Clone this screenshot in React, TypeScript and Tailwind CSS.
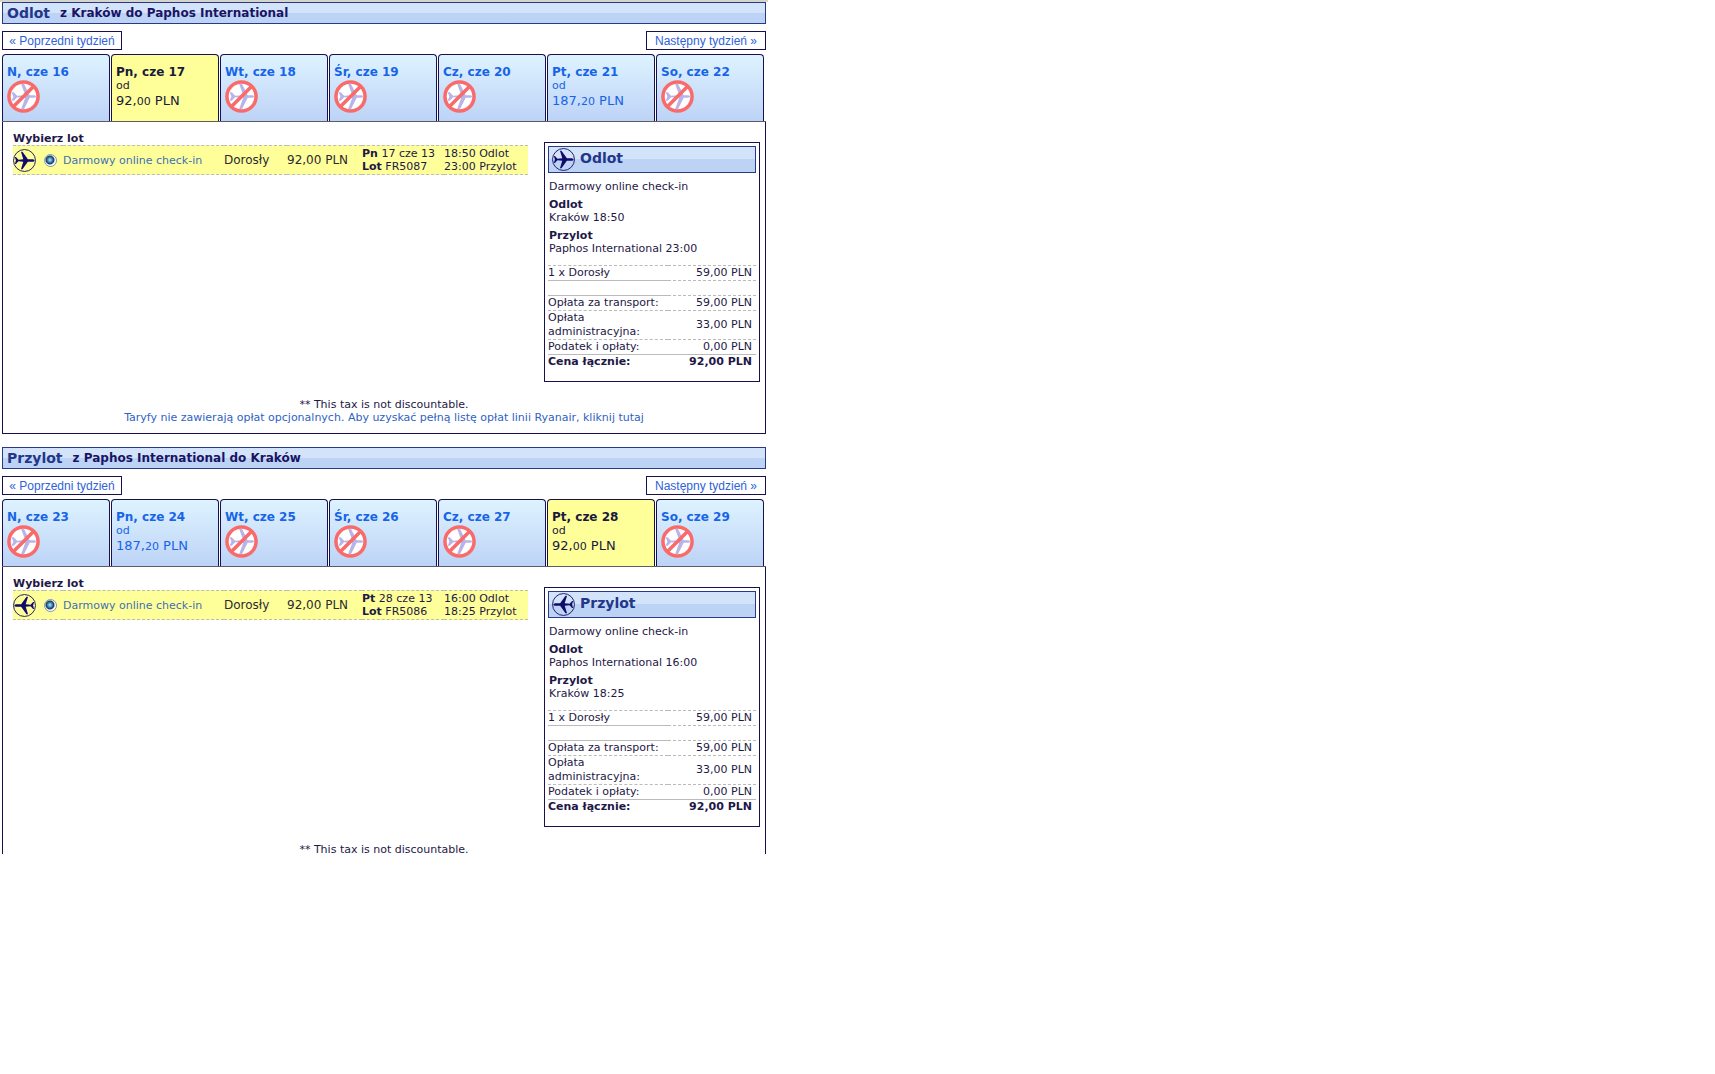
import React, { useId, useState } from 'react';
import cn from 'clsx';

type Day = { label: string; whole?: string; cents?: string };

type Leg = {
  title: string;
  route: string;
  days: Day[];
  selected: number;
  weekday: string;
  date: string;
  flight: string;
  departs: string;
  arrives: string;
  from: string;
  to: string;
  inbound?: boolean;
};

const legs: Leg[] = [
  {
    title: 'Odlot',
    route: 'z Kraków do Paphos International',
    days: [
      { label: 'N, cze 16' },
      { label: 'Pn, cze 17', whole: '92', cents: '00' },
      { label: 'Wt, cze 18' },
      { label: 'Śr, cze 19' },
      { label: 'Cz, cze 20' },
      { label: 'Pt, cze 21', whole: '187', cents: '20' },
      { label: 'So, cze 22' },
    ],
    selected: 1,
    weekday: 'Pn',
    date: '17 cze 13',
    flight: 'FR5087',
    departs: '18:50',
    arrives: '23:00',
    from: 'Kraków',
    to: 'Paphos International',
  },
  {
    title: 'Przylot',
    route: 'z Paphos International do Kraków',
    days: [
      { label: 'N, cze 23' },
      { label: 'Pn, cze 24', whole: '187', cents: '20' },
      { label: 'Wt, cze 25' },
      { label: 'Śr, cze 26' },
      { label: 'Cz, cze 27' },
      { label: 'Pt, cze 28', whole: '92', cents: '00' },
      { label: 'So, cze 29' },
    ],
    selected: 5,
    weekday: 'Pt',
    date: '28 cze 13',
    flight: 'FR5086',
    departs: '16:00',
    arrives: '18:25',
    from: 'Paphos International',
    to: 'Kraków',
    inbound: true,
  },
];

// Plane seen from above, nose to the right
const PlaneIcon = ({ inbound, className }: { inbound?: boolean; className?: string }) => (
  <svg viewBox="0 0 34 34" className={cn('size-[23px] shrink-0', inbound && '-scale-x-100', className)} aria-hidden="true">
    <circle cx="17" cy="17" r="16.2" fill="none" stroke="#1b1464" strokeWidth="1.4" />
    <path
      d="M32 17c0-1-1.6-1.9-4-1.9h-6L14 4h-2.2l3.4 11.1L8 15.8 4.4 12H2.8l1.5 5-1.5 5h1.6L8 18.2l7.2.7L11.8 30H14l8-11.1h6c2.4 0 4-.9 4-1.9z"
      fill="#100a6b"
    />
  </svg>
);

const NoFlightIcon = () => (
  <svg viewBox="0 0 34 34" className="size-[33px]" aria-hidden="true">
    <circle cx="17" cy="17" r="15" fill="#fff" />
    <path
      d="M30 17c0-.9-1.4-1.4-3.4-1.4h-3.2L17.6 4h-3l4.2 11.6-8.4.6L7 12.6H4.8L6.6 17l-1.8 4.4H7l3.4-3.6 8.4.6L14.6 30h3l5.8-11.6h3.2c2 0 3.4-.5 3.4-1.4z"
      fill="#b9b4e8"
    />
    <circle cx="17" cy="17" r="15" fill="none" stroke="#f96a6a" strokeWidth="3.6" />
    <path d="M6.7 27.3 27.3 6.7" stroke="#f96a6a" strokeWidth="3.6" />
  </svg>
);

const WeekButton = ({ children }: { children: React.ReactNode }) => (
  <button
    type="button"
    className="h-[19px] w-[120px] border border-[#17124f] bg-white font-['Liberation_Sans',sans-serif] text-[12px] leading-[18px] text-[#2f62d9]"
  >
    {children}
  </button>
);

const Summary = ({ leg }: { leg: Leg }) => (
  <aside className="mt-5 mr-[5px] h-60 w-[216px] shrink-0 border border-[#17124f] p-[3px]">
    <h3 className="flex h-[27px] items-center gap-[5px] border border-[#263a86] bg-linear-to-b from-[#d2e3fa] from-50% to-[#bdd3f6] to-50% pl-[3px] text-[14px] font-bold text-[#22368a]">
      <PlaneIcon inbound={leg.inbound} />
      <span className="pb-[3px]">{leg.title}</span>
    </h3>
    <div className="px-px pt-[7px]">
      <p className="mb-[5px]">Darmowy online check-in</p>
      <p className="mb-[5px]">
        <b>Odlot</b>
        <br />
        {leg.from} {leg.departs}
      </p>
      <p>
        <b>Przylot</b>
        <br />
        {leg.to} {leg.arrives}
      </p>
    </div>
    <table className="mt-[10px] w-full border-collapse leading-[14px] [&_td]:p-0 [&_td:last-child]:pr-1 [&_td:last-child]:text-right">
      <tbody>
        <tr className="border-t border-dashed border-[#bbb]">
          <td className="w-[120px]">1 x Dorosły</td>
          <td>59,00 PLN</td>
        </tr>
        <tr className="h-[15px]">
          <td className="border-y border-solid border-[#bbb]" />
          <td className="border-y border-dashed border-[#bbb]" />
        </tr>
        <tr className="border-b border-dashed border-[#bbb]">
          <td>Opłata za transport:</td>
          <td>59,00 PLN</td>
        </tr>
        <tr className="border-b border-dashed border-[#bbb]">
          <td>Opłata administracyjna:</td>
          <td>33,00 PLN</td>
        </tr>
        <tr className="border-b border-[#bbb]">
          <td>Podatek i opłaty:</td>
          <td>0,00 PLN</td>
        </tr>
        <tr className="font-bold">
          <td>Cena łącznie:</td>
          <td>92,00 PLN</td>
        </tr>
      </tbody>
    </table>
  </aside>
);

const FlightLeg = ({ leg, isLast }: { leg: Leg; isLast: boolean }) => {
  const [selected, setSelected] = useState(leg.selected);
  const radioId = useId();

  return (
    <section className={cn(!isLast && 'mb-[13px]')}>
      <h2 className="flex h-[22px] items-center gap-[10px] border border-[#263a86] bg-linear-to-b from-[#d2e3fa] from-50% to-[#bdd3f6] to-50% pl-1 font-bold">
        <span className="text-[14px] text-[#22368a]">{leg.title}</span>
        <span className="pt-px text-[12px] text-[#1a1464]">{leg.route}</span>
      </h2>
      <div className="mt-[7px] mb-1 flex justify-between">
        <WeekButton>« Poprzedni tydzień</WeekButton>
        <WeekButton>Następny tydzień »</WeekButton>
      </div>
      <div className="grid grid-cols-7 gap-px border-b border-[#5c5c66] pr-[2px]">
        {leg.days.map((day, i) => (
          <button
            key={day.label}
            type="button"
            onClick={() => setSelected(i)}
            className={cn(
              'flex h-[67px] flex-col items-start rounded-t-[4px] border border-b-0 border-[#17124f] pt-[9px] pl-1',
              i === selected ? 'bg-[#ffff99] text-[#1a1a3c]' : 'bg-linear-to-b from-[#def3ff] to-[#bdd3f6] text-[#1764e8]'
            )}
          >
            <span className="text-[12px] leading-4 font-bold">{day.label}</span>
            {day.whole ? (
              <>
                <span className="text-[11px] leading-3">od</span>
                <span className="text-[13px] leading-[18px]">
                  {day.whole},<span className="text-[11px]">{day.cents}</span> PLN
                </span>
              </>
            ) : (
              <NoFlightIcon />
            )}
          </button>
        ))}
      </div>
      <div className={cn('border-x border-[#17124f]', !isLast && 'border-b pb-[9px]')}>
        <div className="flex justify-between">
          <div className="box-content w-[515px] pt-[11px] pl-[10px]">
            <h3 className="leading-3 font-bold">Wybierz lot</h3>
            <table className="w-full border-collapse bg-[#ffff99] [&_td]:border-y [&_td]:border-dashed [&_td]:border-[#bbb] [&_td]:p-0">
              <tbody>
                <tr className="h-[29px] whitespace-nowrap">
                  <td className="w-[31px]">
                    <PlaneIcon inbound={leg.inbound} />
                  </td>
                  <td className="w-[19px]">
                    <input
                      id={radioId}
                      type="radio"
                      defaultChecked
                      className="block size-[13px] appearance-none rounded-full border border-[#8b93a0] bg-white bg-radial-[circle_at_45%_45%] from-[#8fe0f5] from-5% via-[#123c6b] via-45% to-white to-60%"
                    />
                  </td>
                  <td className="w-[161px]">
                    <label htmlFor={radioId} className="text-[#3d70b8]">
                      Darmowy online check-in
                    </label>
                  </td>
                  <td className="w-[63px] text-[12px] text-[#2a2a33]">Dorosły</td>
                  <td className="w-[75px] text-[12px] text-[#2a2a33]">92,00 PLN</td>
                  <td className="w-[82px]">
                    <b>{leg.weekday}</b> {leg.date}
                    <br />
                    <b>Lot</b> {leg.flight}
                  </td>
                  <td>
                    {leg.departs} Odlot
                    <br />
                    {leg.arrives} Przylot
                  </td>
                </tr>
              </tbody>
            </table>
          </div>
          <Summary leg={leg} />
        </div>
        <div className={cn('mt-4 text-center', isLast && 'h-[11px]')}>
          <p>** This tax is not discountable.</p>
          {!isLast && (
            <a href="#oplaty" className="block text-[#2f62c4]">
              Taryfy nie zawierają opłat opcjonalnych. Aby uzyskać pełną listę opłat linii Ryanair, kliknij tutaj
            </a>
          )}
        </div>
      </div>
    </section>
  );
};

export default function App() {
  return (
    <div className="max-w-[768px] border-t-2 border-[#d6d4cc] bg-white font-['DejaVu_Sans',Verdana,sans-serif] text-[11px] leading-[13px] text-[#1e1846]">
      <main className="px-[2px]">
        {legs.map((leg, i) => (
          <FlightLeg key={leg.title} leg={leg} isLast={i === legs.length - 1} />
        ))}
      </main>
    </div>
  );
}
